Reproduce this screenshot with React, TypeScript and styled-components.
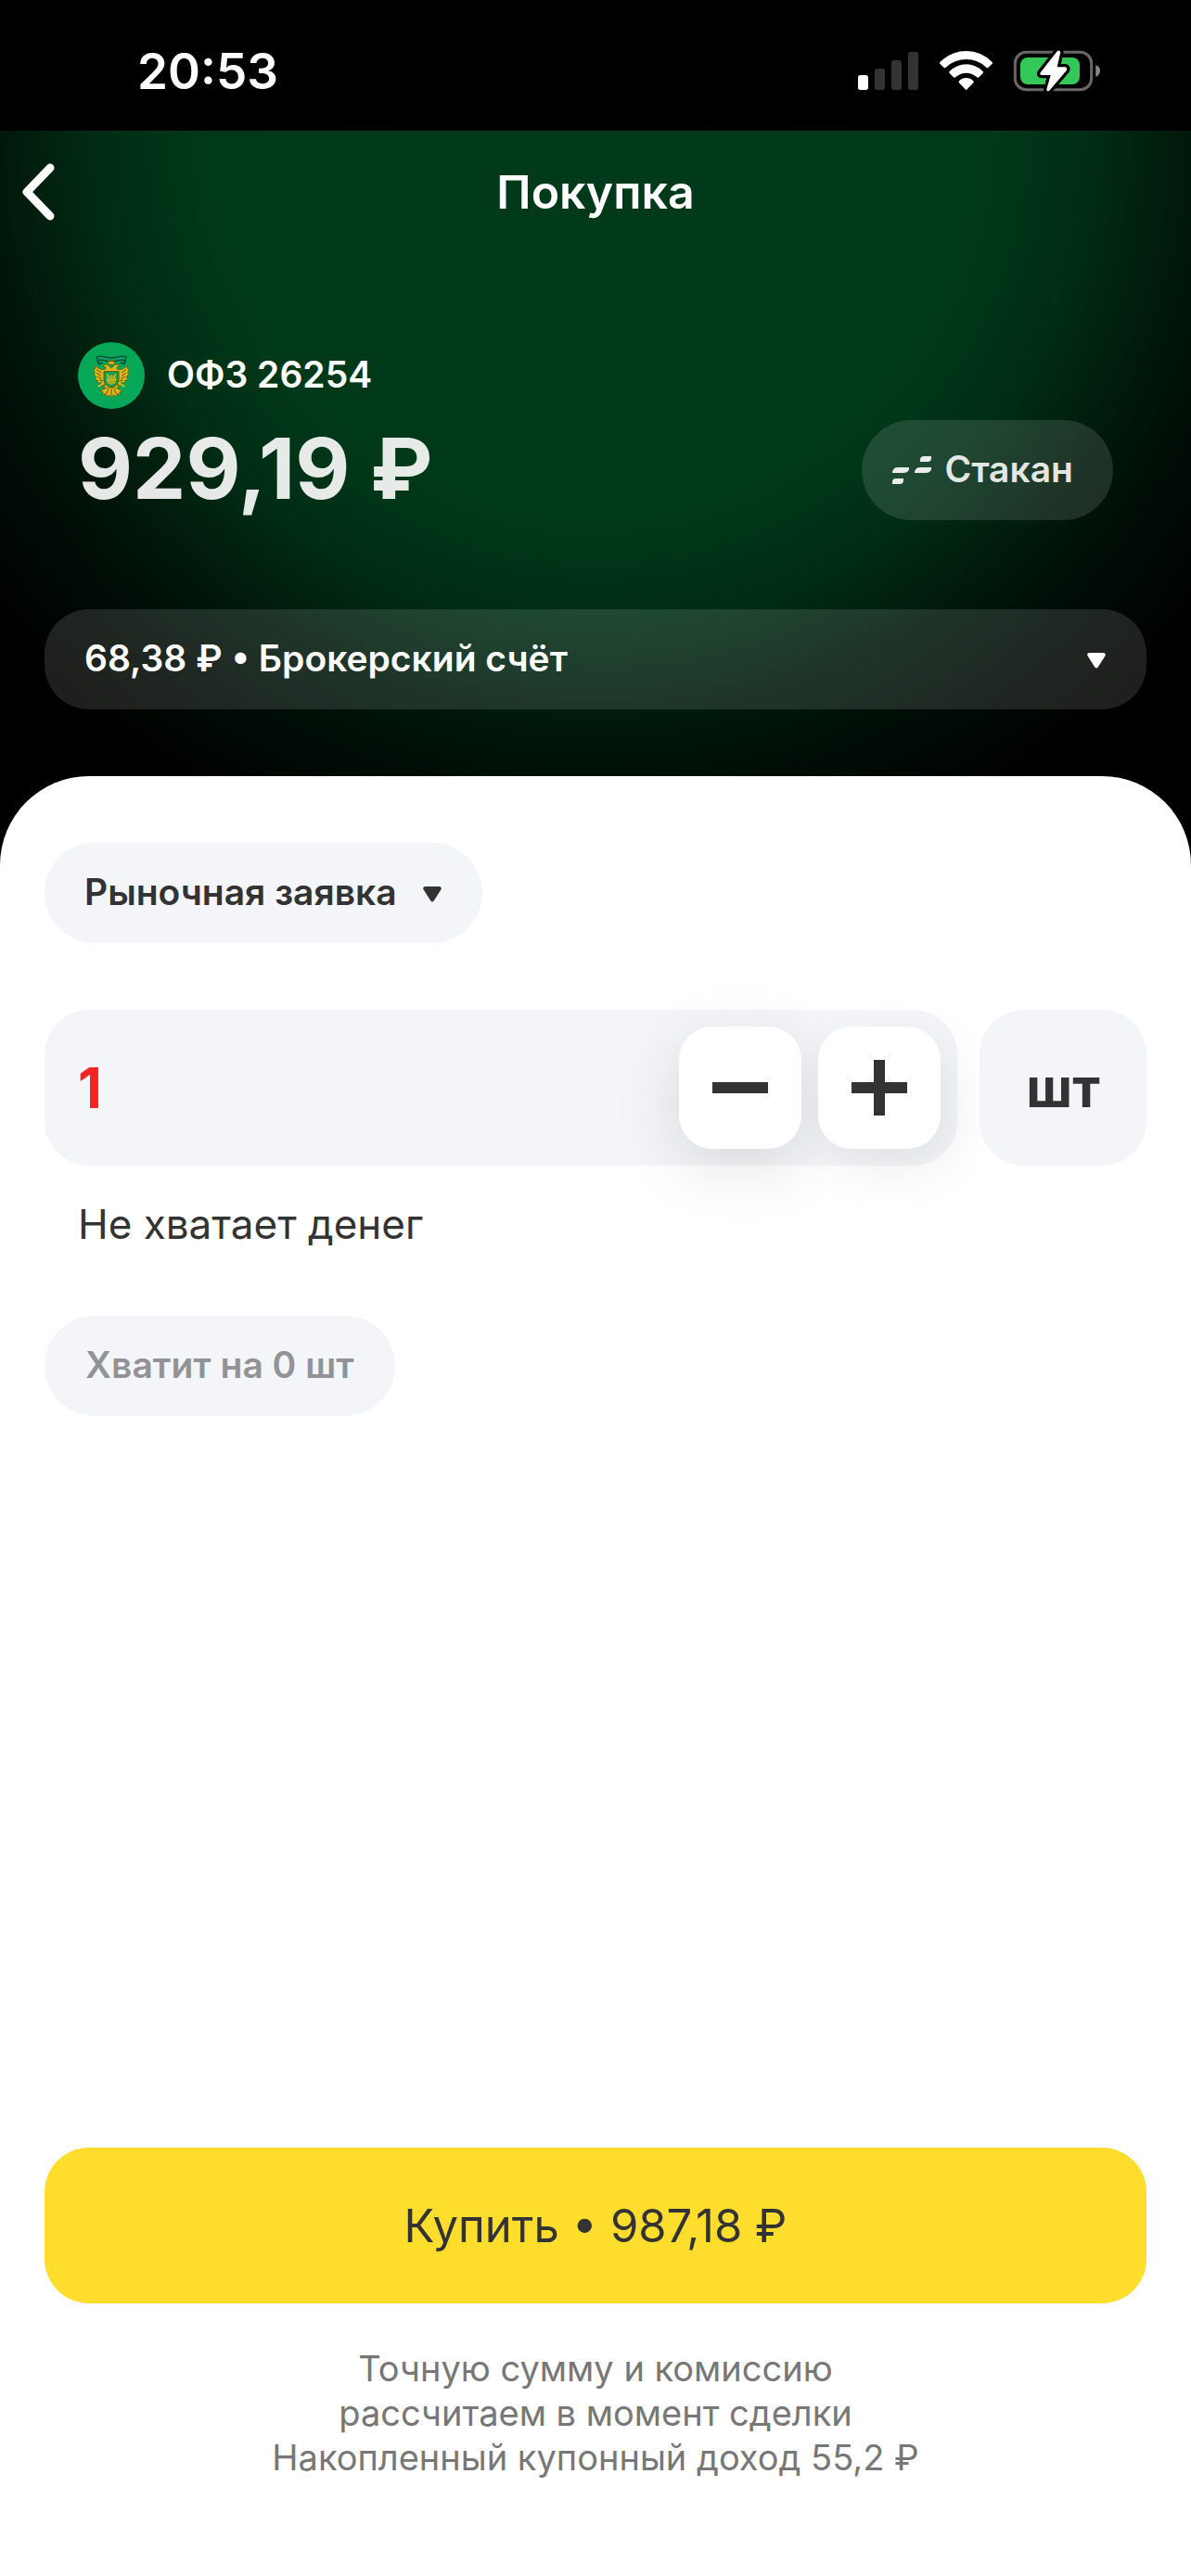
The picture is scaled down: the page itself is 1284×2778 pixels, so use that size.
import React, { useState } from 'react';
import styled, { createGlobalStyle } from 'styled-components';

const UNIT_PRICE = 987.18;

const formatRub = (value: number): string =>
  `${value.toFixed(2).replace('.', ',')} ₽`;

const SignalIcon: React.FC = () => (
  <svg width="67" height="47" viewBox="132 96 201 141" aria-hidden="true">
    <rect x="135" y="180" width="33" height="48" rx="8" fill="#fff" />
    <rect x="189" y="159" width="33" height="69" rx="8" fill="#333" />
    <rect x="243" y="132" width="33" height="96" rx="8" fill="#333" />
    <rect x="297" y="105" width="33" height="123" rx="8" fill="#333" />
  </svg>
);

const WifiIcon: React.FC = () => (
  <svg width="59" height="47" viewBox="396 96 177 141" fill="#fff" aria-hidden="true">
    <path d="M400 138Q436 102 485 102Q534 102 569 138Q571 141 569 143L556 156Q553 158 550 155Q523 129 485 129Q447 129 419 155Q416 158 413 156L400 143Q398 141 400 138Z" />
    <path d="M431 168Q455 145 485 145Q515 145 539 168Q542 171 539 174L526 187Q523 190 520 187Q505 173 485 173Q465 173 450 187Q447 190 444 187L431 174Q428 171 431 168Z" />
    <path d="M462 199Q472 189 485 189Q498 189 508 199Q511 202 508 205L488 226Q485 229 482 226L462 205Q459 202 462 199Z" />
  </svg>
);

const BatteryIcon: React.FC = () => (
  <svg width="96" height="47" viewBox="636 96 288 141" aria-hidden="true">
    <rect x="643" y="106" width="247" height="121" rx="36" fill="none" stroke="#6b6769" strokeWidth="9" />
    <path d="M904 147Q918 153 918 166Q918 179 904 186Z" fill="#8a8789" />
    <rect x="660" y="123" width="192" height="87" rx="24" fill="#34c759" />
    <path
      d="M779 103L725 172Q721 180 730 180H758L745 226Q746 236 754 230L810 164Q813 154 804 154H779L790 106Q787 97 779 103Z"
      fill="#fff"
      stroke="#000"
      strokeWidth="20"
      strokeLinejoin="round"
      paintOrder="stroke"
    />
  </svg>
);

const BackIcon: React.FC = () => (
  <svg width="36" height="62" viewBox="0 0 36 62" fill="none" aria-hidden="true">
    <path
      d="M30 5L5 31L30 57"
      stroke="#fff"
      strokeWidth="9"
      strokeLinecap="round"
      strokeLinejoin="round"
    />
  </svg>
);

const OrderBookIcon: React.FC = () => (
  <svg width="42" height="30" viewBox="0 0 42 30" fill="currentColor" aria-hidden="true">
    <path d="M34 0H42V2Q42 6 38 6H30V4Q30 0 34 0Z" />
    <path d="M30 12H42V14Q41 18 36 18H24V17Q25 12 30 12Z" />
    <path d="M6 12H18V14Q17 18 12 18H0V17Q1 12 6 12Z" />
    <path d="M4 24H12V26Q12 30 8 30H0V28Q0 24 4 24Z" />
  </svg>
);

const ArrowIcon: React.FC = () => (
  <svg width="20" height="17" viewBox="0 0 20 17" fill="currentColor" aria-hidden="true">
    <path d="M2 0H18Q21 1 19 4L12 15Q10 18 8 15L1 4Q-1 1 2 0Z" />
  </svg>
);

const MinusIcon: React.FC = () => (
  <svg width="60" height="60" viewBox="0 0 60 60" fill="#333" aria-hidden="true">
    <path d="M0 24H60V36H0Z" />
  </svg>
);

const PlusIcon: React.FC = () => (
  <svg width="60" height="60" viewBox="0 0 60 60" fill="#333" aria-hidden="true">
    <path d="M0 24H24V0H36V24H60V36H36V60H24V36H0Z" />
  </svg>
);

// Double-headed eagle on a green disc
const BondLogo: React.FC = () => (
  <svg width="72" height="72" viewBox="42 27 216 216" aria-hidden="true">
    <circle cx="150" cy="135" r="108" fill="#06a857" />
    <path
      d="M103 75Q112 70 126 74Q150 81 174 74Q188 70 198 75L195 87Q184 82 174 86Q150 93 126 86Q114 82 106 87Z"
      fill="#12a062"
      stroke="#064a38"
      strokeWidth="4"
    />
    <path d="M105 87L110 98L122 92M196 87L191 98L179 92" fill="none" stroke="#064a38" strokeWidth="5" />
    <g fill="#e3b416" stroke="#4c5410" strokeWidth="2">
      <path d="M138 99L141 86L147 91L150 82L153 91L159 86L162 99Z" />
      <path d="M144 106Q140 97 132 99L122 104L132 108Q134 112 130 115Q120 118 110 112L96 103L98 113L92 117L98 125L93 131L101 138L97 146L106 151L105 159L118 158L116 168L130 164L126 174L138 180H162L174 174L170 164L184 168L182 158L195 159L194 151L203 146L199 138L207 131L202 125L208 117L202 113L204 103L190 112Q180 118 170 115Q166 112 168 108L178 104L168 99Q160 97 156 106L150 112Z" />
      <path d="M136 174L115 184L124 189L119 197L132 194L133 203L143 198L150 206L157 198L167 203L168 194L181 197L176 189L185 184L164 174Z" />
    </g>
    <g fill="none" stroke="#55590f" strokeWidth="3">
      <path d="M102 116L117 126M102 127L117 136M105 138L119 146M111 150L123 153" />
      <path d="M198 116L183 126M198 127L183 136M195 138L181 146M189 150L177 153" />
      <path d="M141 178L134 194M150 178V201M159 178L166 194" />
    </g>
    <path
      d="M126 122H174V150Q174 166 150 173Q126 166 126 150Z"
      fill="#12a050"
      stroke="#4c5c14"
      strokeWidth="3"
    />
    <path
      d="M136 129Q142 136 137 145Q135 157 146 162M164 129Q158 136 163 145Q165 157 154 162M144 136V158M150 132V165M156 136V158M138 149H162"
      fill="none"
      stroke="#e2b71b"
      strokeWidth="4"
    />
    <path d="M107 171L122 162M193 171L178 162" stroke="#e3b416" strokeWidth="6" />
  </svg>
);

const App: React.FC = () => {
  const [quantity, setQuantity] = useState<string>('1');
  const count = Number(quantity) || 0;

  const changeBy = (delta: number): void => {
    setQuantity(String(Math.max(1, count + delta)));
  };

  return (
    <Page>
      <GlobalStyle />
      <StatusBar>
        <Time>20:53</Time>
        <StatusIcons>
          <SignalIcon />
          <WifiIcon />
          <BatteryIcon />
        </StatusIcons>
      </StatusBar>

      <Header>
        <NavBar>
          <BackButton type="button" aria-label="Назад">
            <BackIcon />
          </BackButton>
          <Title>Покупка</Title>
        </NavBar>
        <Asset>
          <AssetName>
            <BondLogo />
            <span>ОФЗ 26254</span>
          </AssetName>
          <PriceRow>
            <Price>929,19 ₽</Price>
            <OrderBookButton type="button">
              <OrderBookIcon />
              <span>Стакан</span>
            </OrderBookButton>
          </PriceRow>
        </Asset>
        <SelectPill $dark>
          <Select aria-label="Счёт">
            <option>68,38 ₽ • Брокерский счёт</option>
          </Select>
          <ArrowIcon />
        </SelectPill>
      </Header>

      <Sheet>
        <SelectPill>
          <Select aria-label="Тип заявки">
            <option>Рыночная заявка</option>
          </Select>
          <ArrowIcon />
        </SelectPill>

        <QuantityRow>
          <QuantityField>
            <QuantityInput
              aria-label="Количество"
              aria-describedby="quantity-error"
              aria-invalid="true"
              inputMode="numeric"
              value={quantity}
              onChange={(e): void => setQuantity(e.target.value)}
            />
            <StepButton type="button" aria-label="Меньше" onClick={(): void => changeBy(-1)}>
              <MinusIcon />
            </StepButton>
            <StepButton type="button" aria-label="Больше" onClick={(): void => changeBy(1)}>
              <PlusIcon />
            </StepButton>
          </QuantityField>
          <UnitButton type="button">шт</UnitButton>
        </QuantityRow>
        <ErrorText id="quantity-error">Не хватает денег</ErrorText>
        <Chip type="button" disabled>
          Хватит на 0 шт
        </Chip>

        <Bottom>
          <BuyButton type="button">Купить • {formatRub(UNIT_PRICE * count)}</BuyButton>
          <Note>
            Точную сумму и комиссию
            <br />
            рассчитаем в момент сделки
            <br />
            Накопленный купонный доход 55,2 ₽
          </Note>
        </Bottom>
      </Sheet>
    </Page>
  );
};

const GlobalStyle = createGlobalStyle`
  * {
    box-sizing: border-box;
  }

  body {
    margin: 0;
    background: #000;
    font-family: Inter, 'Liberation Sans', sans-serif;
  }

  button,
  input,
  select {
    margin: 0;
    padding: 0;
    border: 0;
    background: none;
    color: inherit;
    font: inherit;
    cursor: pointer;
  }

  svg {
    display: block;
    flex-shrink: 0;
  }
`;

const Page = styled.div`
  display: flex;
  flex-direction: column;
  min-height: 100vh;
  background: #000;
`;

const StatusBar = styled.div`
  display: flex;
  align-items: center;
  justify-content: space-between;
  height: 141px;
  padding: 12px 96px 0 148px;
  color: #fff;
`;

const Time = styled.span`
  font-size: 53px;
  font-weight: 600;
`;

const StatusIcons = styled.div`
  display: flex;
  gap: 21px;
`;

const Header = styled.header`
  display: flex;
  flex-direction: column;
  padding: 0 48px 72px;
  background: radial-gradient(
    circle 840px at 50% 0,
    #003a1b 0%,
    #003919 50%,
    #002d15 63%,
    #001a0b 75%,
    #000c05 86%,
    #000 100%
  );
  color: #fff;
`;

const NavBar = styled.nav`
  display: grid;
  grid-template-columns: 1fr auto 1fr;
  align-items: center;
  height: 132px;
  margin: 0 -24px;
`;

const BackButton = styled.button`
  justify-self: start;
`;

const Title = styled.h1`
  margin: 0;
  font-size: 50px;
  font-weight: 600;
`;

const Asset = styled.section`
  padding: 96px 36px;
`;

const AssetName = styled.div`
  display: flex;
  align-items: center;
  gap: 24px;
  height: 72px;
  font-size: 39px;
  font-weight: 600;

  & span {
    padding-bottom: 4px;
  }
`;

const PriceRow = styled.div`
  display: flex;
  align-items: center;
  justify-content: space-between;
  height: 108px;
  margin-top: 12px;
`;

const Price = styled.span`
  padding-bottom: 4px;
  color: rgba(255, 255, 255, 0.9);
  font-size: 91px;
  font-weight: 700;
`;

const OrderBookButton = styled.button`
  display: flex;
  align-items: center;
  gap: 14px;
  height: 108px;
  padding: 0 43px 0 33px;
  border-radius: 54px;
  background: rgba(255, 255, 255, 0.12);
  color: rgba(255, 255, 255, 0.9);
  font-size: 39px;
  font-weight: 600;

  & span {
    padding-bottom: 4px;
  }
`;

const SelectPill = styled.div<{ $dark?: boolean }>`
  display: flex;
  align-items: center;
  align-self: ${(props) => (props.$dark ? 'stretch' : 'flex-start')};
  justify-content: space-between;
  gap: 28px;
  height: 108px;
  padding: 2px 44px 0 43px;
  border-radius: ${(props) => (props.$dark ? '48px' : '54px')};
  background: ${(props) =>
    props.$dark ? 'rgba(255, 255, 255, 0.12)' : '#f3f5f9'};
  color: ${(props) => (props.$dark ? '#fff' : '#333')};
`;

const Select = styled.select`
  appearance: none;
  padding-bottom: 6px;
  font-size: 39px;
  font-weight: 600;

  & option {
    color: #333;
  }
`;

const Sheet = styled.main`
  display: flex;
  flex: 1;
  flex-direction: column;
  align-items: flex-start;
  padding: 72px 48px 104px;
  border-radius: 96px 96px 0 0;
  background: #fff;
  color: #333;
`;

const QuantityRow = styled.div`
  display: flex;
  gap: 24px;
  width: 100%;
  margin-top: 72px;
`;

const QuantityField = styled.div`
  display: flex;
  flex: 1;
  align-items: center;
  gap: 18px;
  min-width: 0;
  height: 168px;
  padding: 0 18px 0 36px;
  border-radius: 48px;
  background: #f3f5f9;
`;

const QuantityInput = styled.input`
  flex: 1;
  min-width: 0;
  outline: none;
  color: #f52323;
  font-size: 60px;
  font-weight: 700;
  cursor: text;
`;

const StepButton = styled.button`
  display: flex;
  flex-shrink: 0;
  align-items: center;
  justify-content: center;
  width: 132px;
  height: 132px;
  border-radius: 36px;
  background: #fff;
  box-shadow: 0 18px 72px rgba(0, 0, 0, 0.12);

  /* keeps the neighbour's shadow off the button face */
  & + & {
    box-shadow: 12px 18px 60px -6px rgba(0, 0, 0, 0.1);
  }
`;

const UnitButton = styled.button`
  flex-shrink: 0;
  width: 180px;
  border-radius: 48px;
  background: #f3f5f9;
  font-size: 58px;
  font-weight: 700;
`;

const ErrorText = styled.p`
  margin: 36px 0 72px;
  padding-left: 36px;
  font-size: 44px;
  line-height: 54px;
`;

const Chip = styled.button`
  height: 108px;
  padding: 0 44px 4px;
  border-radius: 54px;
  background: #f3f5f9;
  color: #929396;
  font-size: 39px;
  font-weight: 600;
`;

const Bottom = styled.div`
  width: 100%;
  margin-top: auto;
`;

const BuyButton = styled.button`
  width: 100%;
  height: 168px;
  border-radius: 48px;
  background: #ffdd2d;
  font-size: 49px;
`;

const Note = styled.p`
  margin: 46px 0 0;
  color: #777;
  font-size: 38px;
  line-height: 48px;
  text-align: center;
`;

export default App;
